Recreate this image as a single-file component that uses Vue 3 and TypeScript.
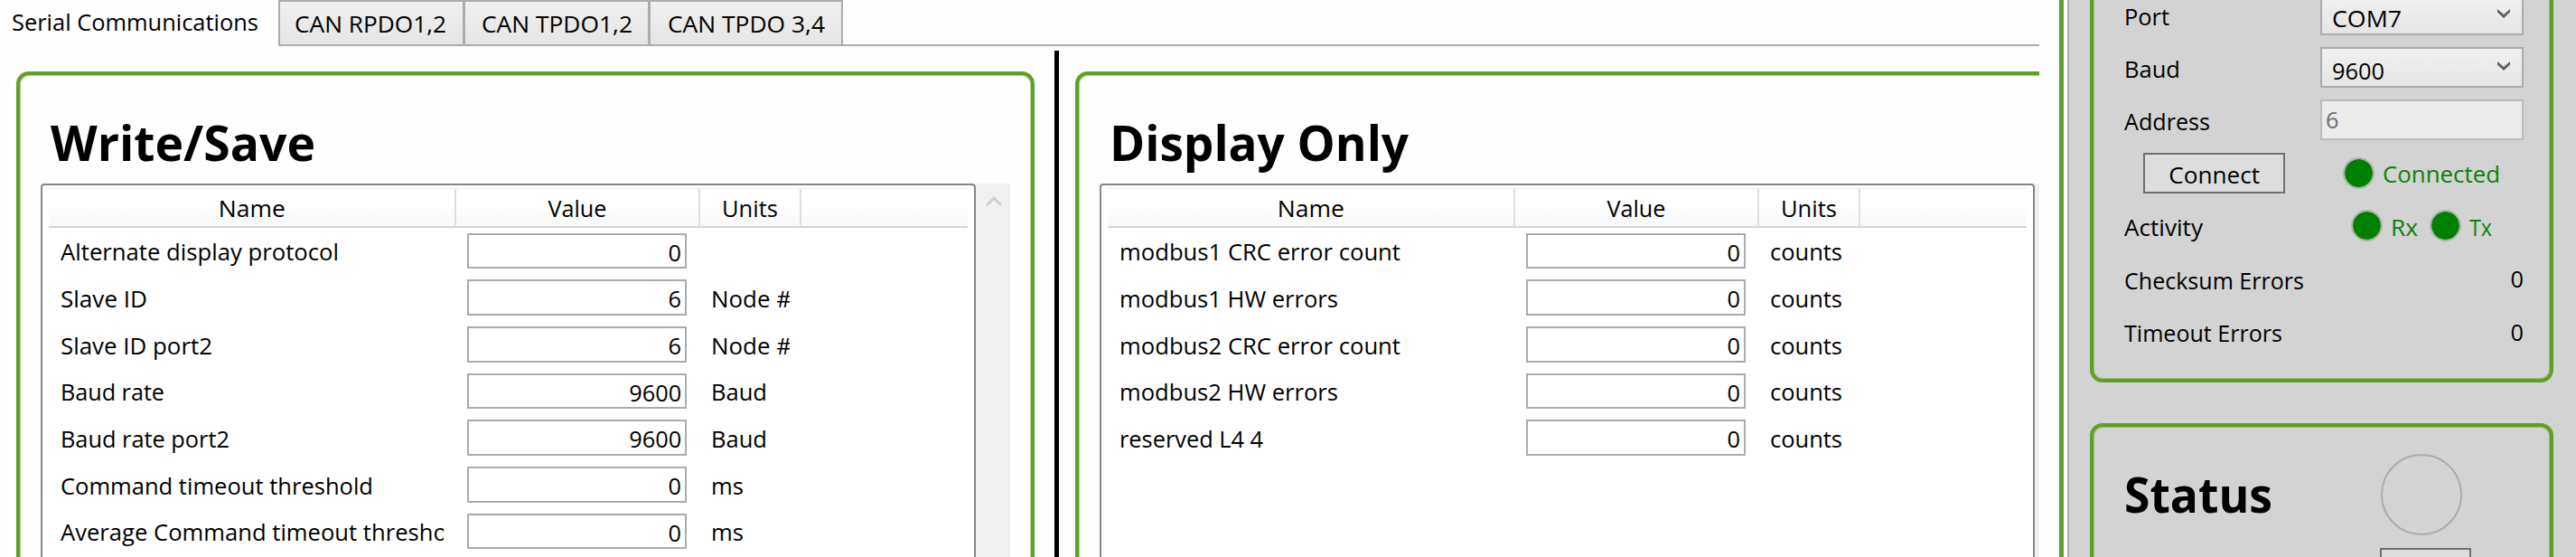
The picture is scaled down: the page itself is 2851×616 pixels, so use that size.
<script setup lang="ts">
import type { Directive } from 'vue'

interface Row {
  name: string
  width: number
  value: string
  units?: string
  unitsWidth?: number
}

interface Panel {
  id: string
  title: string
  titleWidth: number
  rows: Row[]
}

const tabs = [
  { label: 'CAN RPDO1,2', width: 168, cls: 'tab-a' },
  { label: 'CAN TPDO1,2', width: 167, cls: 'tab-b' },
  { label: 'CAN TPDO 3,4', width: 174, cls: 'tab-c' },
]

const panels: Panel[] = [
  {
    id: 'write',
    title: 'Write/Save',
    titleWidth: 293,
    rows: [
      { name: 'Alternate display protocol', width: 308, value: '0' },
      { name: 'Slave ID', width: 96, value: '6', units: 'Node #', unitsWidth: 89 },
      { name: 'Slave ID port2', width: 168, value: '6', units: 'Node #', unitsWidth: 89 },
      { name: 'Baud rate', width: 115, value: '9600', units: 'Baud', unitsWidth: 62 },
      { name: 'Baud rate port2', width: 187, value: '9600', units: 'Baud', unitsWidth: 62 },
      { name: 'Command timeout threshold', width: 346, value: '0', units: 'ms', unitsWidth: 36 },
      { name: 'Average Command timeout threshold', width: 450, value: '0', units: 'ms', unitsWidth: 36 },
    ],
  },
  {
    id: 'display',
    title: 'Display Only',
    titleWidth: 331,
    rows: [
      { name: 'modbus1 CRC error count', width: 311, value: '0', units: 'counts', unitsWidth: 80 },
      { name: 'modbus1 HW errors', width: 242, value: '0', units: 'counts', unitsWidth: 80 },
      { name: 'modbus2 CRC error count', width: 311, value: '0', units: 'counts', unitsWidth: 80 },
      { name: 'modbus2 HW errors', width: 242, value: '0', units: 'counts', unitsWidth: 80 },
      { name: 'reserved L4 4', width: 159, value: '0', units: 'counts', unitsWidth: 80 },
    ],
  },
]

// Condenses a text run horizontally to the given advance width.
const vFit: Directive<HTMLElement, number> = {
  mounted(el, binding) {
    const natural = el.getBoundingClientRect().width
    if (natural > 0) el.style.transform = `scaleX(${binding.value / natural})`
  },
}
</script>

<template>
  <div class="app">
    <main class="main">
      <nav class="tabs">
        <div class="tab-active"><span v-fit="273" class="t">Serial Communications</span></div>
        <div v-for="tab in tabs" :key="tab.label" class="tab" :class="tab.cls">
          <span v-fit="tab.width" class="t">{{ tab.label }}</span>
        </div>
        <div class="tab-rest"></div>
      </nav>
      <div class="panels">
        <section v-for="panel in panels" :key="panel.id" class="cell" :class="panel.id">
          <div class="group">
            <h2 class="title"><span v-fit="panel.titleWidth" class="t">{{ panel.title }}</span></h2>
            <div class="scroller">
              <div class="list">
                <div class="header">
                  <div><span v-fit="74" class="t mid">Name</span></div>
                  <div><span v-fit="65" class="t mid">Value</span></div>
                  <div><span v-fit="62" class="t mid">Units</span></div>
                </div>
                <div class="rows">
                  <div v-for="row in panel.rows" :key="row.name" class="row">
                    <div class="name"><span v-fit="row.width" class="t">{{ row.name }}</span></div>
                    <div class="value"><span v-fit="row.value.length * 14.5" class="t end">{{ row.value }}</span></div>
                    <div class="units"><span v-if="row.units" v-fit="row.unitsWidth ?? 0" class="t">{{ row.units }}</span></div>
                  </div>
                </div>
              </div>
              <div class="scrollbar">
                <svg width="18" height="12" viewBox="0 0 18 12"><path d="M1 8.2 9 0l8 8.2v3.3L9 4.2 1 11.5z" fill="#cdcdcd" /></svg>
              </div>
            </div>
          </div>
        </section>
      </div>
    </main>
    <div class="edge"></div>
    <aside class="side">
      <section class="box connection">
        <div class="field">
          <label><span v-fit="50" class="t">Port</span></label>
          <div class="combo">
            <span v-fit="77" class="t">COM7</span>
            <svg width="14" height="10" viewBox="0 0 14 10"><path d="M0 0 7 6 14 0v3.6L7 10 0 3.6z" fill="#606060" /></svg>
          </div>
        </div>
        <div class="field">
          <label><span v-fit="62" class="t">Baud</span></label>
          <div class="combo">
            <span v-fit="58" class="t">9600</span>
            <svg width="14" height="10" viewBox="0 0 14 10"><path d="M0 0 7 6 14 0v3.6L7 10 0 3.6z" fill="#606060" /></svg>
          </div>
        </div>
        <div class="field">
          <label><span v-fit="95" class="t">Address</span></label>
          <div class="disabled"><span v-fit="14.5" class="t">6</span></div>
        </div>
        <div class="field">
          <div class="btn-cell"><button class="btn"><span v-fit="101" class="t mid">Connect</span></button></div>
          <div class="leds first">
            <i class="led"></i><span v-fit="130" class="t">Connected</span>
          </div>
        </div>
        <div class="field">
          <label><span v-fit="87" class="t">Activity</span></label>
          <div class="leds second">
            <i class="led"></i><span class="slot"><span v-fit="30" class="t">Rx</span></span>
            <i class="led"></i><span class="slot"><span v-fit="25" class="t">Tx</span></span>
          </div>
        </div>
        <div class="field">
          <label><span v-fit="199" class="t">Checksum Errors</span></label>
          <div class="count"><span v-fit="14.5" class="t end">0</span></div>
        </div>
        <div class="field">
          <label><span v-fit="175" class="t">Timeout Errors</span></label>
          <div class="count"><span v-fit="14.5" class="t end">0</span></div>
        </div>
      </section>
      <section class="box status">
        <h2 class="status-title"><span v-fit="164" class="t">Status</span></h2>
        <div class="status-side">
          <div class="lamp"></div>
          <div class="status-btn"></div>
        </div>
      </section>
    </aside>
  </div>
</template>

<style>
body {
  margin: 0;
  background: #fff;
}
</style>

<style scoped>
* {
  box-sizing: border-box;
}
.app {
  display: flex;
  width: 2851px;
  height: 616px;
  overflow: hidden;
  background: #fefefe;
  color: #000;
  font-family: 'Open Sans', 'Noto Sans', sans-serif;
  font-size: 26.3px;
  line-height: 36px;
  white-space: nowrap;
}
.t {
  display: inline-block;
  transform-origin: left center;
}
.mid {
  transform-origin: center;
}
.end {
  transform-origin: right center;
}
.main {
  flex: none;
  width: 2257px;
  height: 616px;
  overflow: hidden;
}
.tabs {
  display: flex;
  height: 51px;
}
.tab-active {
  width: 308px;
  padding: 6px 0 0 13px;
}
.tab {
  height: 51px;
  border: 2px solid #acacac;
  border-left-width: 1px;
  border-right-width: 2px;
  background: linear-gradient(#f0f0f0, #e5e5e5);
  padding: 6px 0 0 16px;
}
.tab-a {
  width: 206px;
  border-left-width: 2px;
}
.tab-b {
  width: 205px;
  padding-left: 18px;
}
.tab-c {
  width: 214px;
  padding-left: 19px;
}
.tab-rest {
  flex: 1;
  border-bottom: 2px solid #acacac;
}
.panels {
  display: flex;
  height: 565px;
}
.cell {
  flex: none;
  padding-top: 28px;
}
.write {
  width: 1172px;
  padding-left: 18px;
  background: linear-gradient(#000, #000) 1167px 5px / 5px 560px no-repeat;
}
.display {
  width: 1200px;
  padding-left: 18px;
}
.group {
  width: 1127px;
  height: 640px;
  border: 4px solid #629f28;
  border-radius: 14px;
  box-shadow: inset 0 0 0 1px #b3d190;
  padding: 0 23px;
}
.title {
  margin: 0;
  height: 120px;
  padding: 38px 0 0 11px;
  font-size: 54.5px;
  line-height: 72px;
  font-weight: 700;
}
.scroller {
  display: flex;
  height: 500px;
}
.list {
  width: 1035px;
  border: 2px solid #828790;
  border-radius: 4px;
  padding: 3px 7px 0;
  background: #fff;
}
.header {
  display: grid;
  grid-template-columns: 451px 270px 112px;
  height: 44px;
  border-top: 1px solid #f0f0f1;
  border-bottom: 2px solid #d5d5d5;
  background: linear-gradient(#fff 40%, #f7f8fa);
  text-align: center;
}
.header > div {
  border-right: 2px solid #dedfe1;
  padding-top: 3px;
}
.rows {
  margin-top: -0.4px;
}
.row {
  display: grid;
  grid-template-columns: 451px 270px 112px;
  height: 51.7px;
  align-items: center;
}
.name {
  padding: 1.4px 0 0 13px;
  width: 437px;
  overflow: hidden;
}
.value {
  width: 243px;
  height: 39.7px;
  margin-left: 12px;
  border: 2px solid #ababac;
  padding: 1px 4px 0 0;
  text-align: right;
}
.units {
  width: 99px;
  padding: 1.4px 0 0 12px;
  overflow: hidden;
}
.scrollbar {
  width: 38px;
  background: #f0f0f0;
  padding: 14px 0 0 11px;
}
.scrollbar svg {
  display: block;
}
.edge {
  flex: none;
  width: 33px;
  background:
    linear-gradient(#629f28, #629f28) 22px 0 / 5px 100% no-repeat,
    linear-gradient(#ababab, #ababab) 31px 0 / 2px 100% no-repeat;
}
.side {
  flex: none;
  width: 561px;
  height: 616px;
  background: #d3d3d3;
  padding: 0 25px 0 23px;
}
.box {
  width: 513px;
  border: 4px solid #629f28;
  border-radius: 14px;
  box-shadow: inset 0 0 0 1px #9bba77;
}
.connection {
  height: 453px;
  margin-top: -30px;
  padding: 13px 0 0 33px;
}
.field {
  display: grid;
  grid-template-columns: 218px 225px;
  height: 58.4px;
  align-items: center;
}
.field label {
  padding: 3px 0 0 1px;
}
.combo,
.disabled {
  display: flex;
  justify-content: space-between;
  height: 45px;
  border: 2px solid #acacac;
  padding: 6px 13px 0 11px;
  background: linear-gradient(#f0f0f0, #e5e5e5);
}
.combo svg {
  margin-top: 8px;
}
.disabled {
  padding: 2px 0 0 4px;
  border-color: #bcbcbc;
  background: #ebebeb;
  color: #6d6d6d;
}
.btn-cell {
  padding-left: 22px;
}
.btn {
  display: block;
  width: 157px;
  height: 45px;
  border: 2px solid #707070;
  background: #ddd;
  padding: 3px 0 0;
  font: inherit;
  color: inherit;
}
.leds {
  display: flex;
  align-items: center;
  color: #0b800b;
}
.leds .t {
  padding-top: 2px;
}
.first {
  padding-left: 25px;
}
.second {
  padding-left: 34px;
}
.slot {
  width: 43px;
}
.led {
  width: 35px;
  height: 35px;
  border: 2px solid #a6b6a6;
  border-radius: 50%;
  background: #008000;
  background-clip: padding-box;
  margin-right: 9px;
}
.count {
  text-align: right;
}
.status {
  display: flex;
  height: 240px;
  margin-top: 45px;
}
.status-title {
  margin: 0;
  width: 317px;
  padding: 33px 0 0 34px;
  font-size: 54.5px;
  line-height: 82px;
}
.status-side {
  padding-top: 30px;
}
.lamp {
  width: 90px;
  height: 90px;
  margin-left: 1px;
  border: 2px solid #acacac;
  border-radius: 50%;
}
.status-btn {
  width: 101px;
  height: 45px;
  margin-top: 14px;
  border: 2px solid #707070;
  background: #ddd;
}
</style>
